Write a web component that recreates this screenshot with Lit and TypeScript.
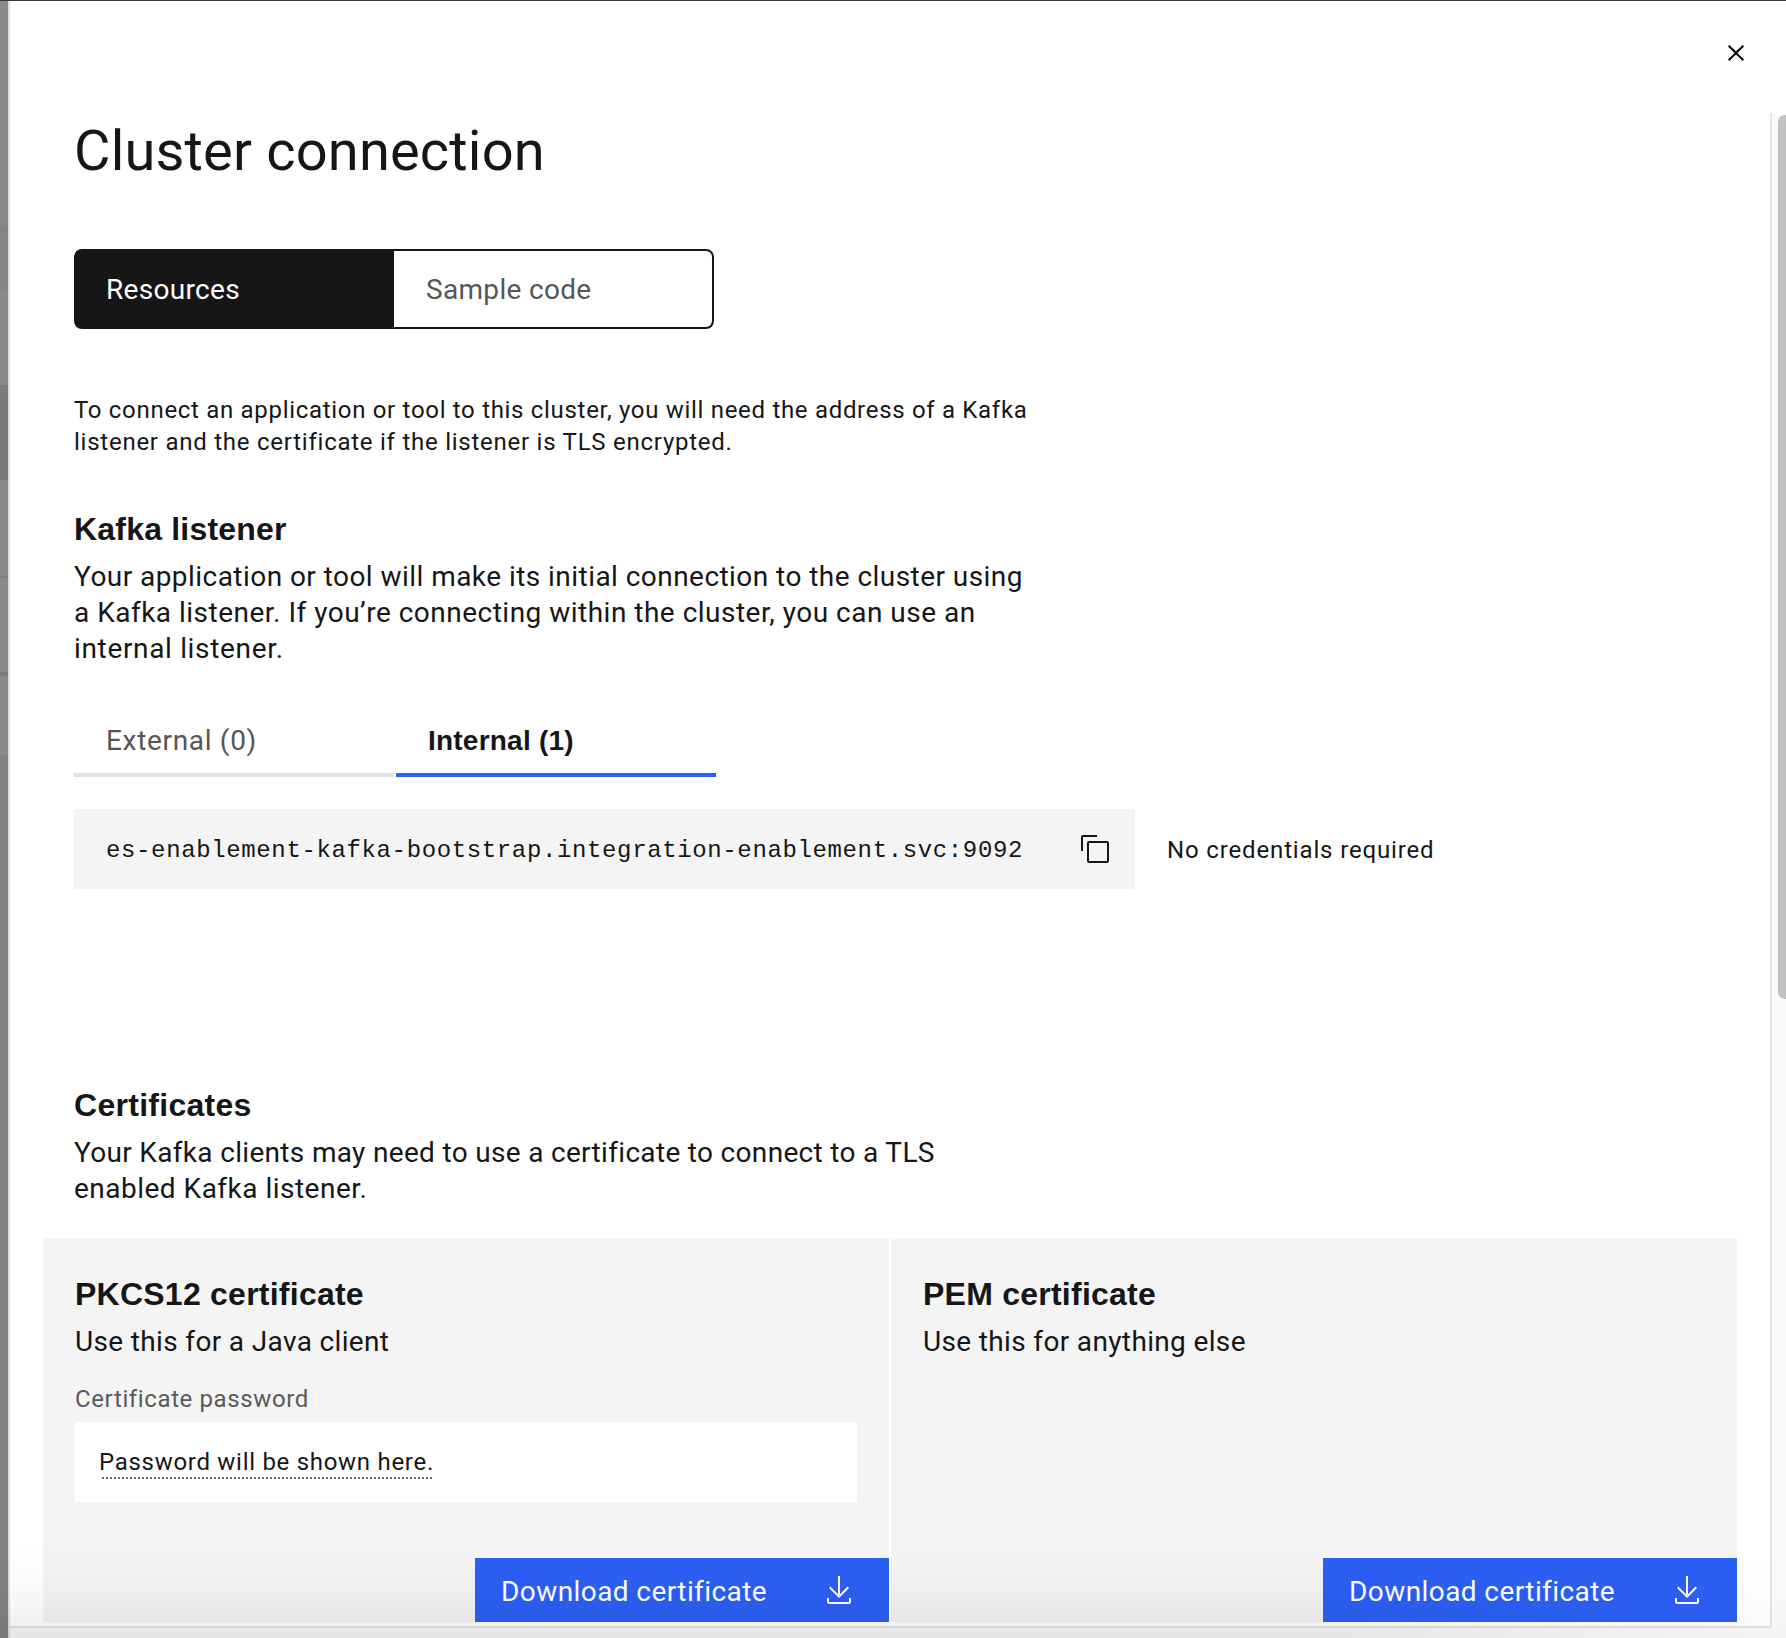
import { LitElement, html, css, svg } from "lit";
import { customElement, property } from "lit/decorators.js";

const copyIcon = html`<svg class="icon" width="32" height="32" viewBox="0 0 32 32" fill="currentColor">
  ${svg`<path d="M28,10V28H10V10H28m0-2H10a2,2,0,0,0-2,2V28a2,2,0,0,0,2,2H28a2,2,0,0,0,2-2V10a2,2,0,0,0-2-2Z"></path>
  <path d="M4,18H2V4A2,2,0,0,1,4,2H18V4H4Z"></path>`}
</svg>`;

const downloadIcon = html`<svg class="icon" width="32" height="32" viewBox="0 0 32 32" fill="currentColor">
  ${svg`<path d="M26,24v4H6V24H4v4H4a2,2,0,0,0,2,2H26a2,2,0,0,0,2-2V24Z"></path>
  <path d="M26 14 24.59 12.59 17 20.17 17 2 15 2 15 20.17 7.41 12.59 6 14 16 24 26 14Z"></path>`}
</svg>`;

const closeIcon = html`<svg class="icon" width="32" height="32" viewBox="0 0 32 32" fill="currentColor">
  ${svg`<path d="M24 9.4 22.6 8 16 14.6 9.4 8 8 9.4 14.6 16 8 22.6 9.4 24 16 17.4 22.6 24 24 22.6 17.4 16 24 9.4Z"></path>`}
</svg>`;

@customElement("download-button")
export class DownloadButton extends LitElement {
  static styles = css`
    :host { display: block; }
    .button {
      display: flex;
      align-items: center;
      justify-content: space-between;
      box-sizing: border-box;
      width: 414px;
      height: 64px;
      margin: 0;
      padding: 0 34px 0 26px;
      border: 0;
      border-radius: 0;
      background: #2c60f4;
      color: #fff;
      font: 400 28px/36px Roboto, sans-serif;
      letter-spacing: 0.42px;
      text-align: left;
    }
    .label { padding-top: 4px; }
    .icon { display: block; }
  `;
  render() {
    return html`<button class="button"><span class="label">Download certificate</span>${downloadIcon}</button>`;
  }
}

@customElement("certificate-card")
export class CertificateCard extends LitElement {
  @property() heading = "";
  @property() description = "";
  static styles = css`
    :host {
      display: flex;
      flex-direction: column;
      box-sizing: border-box;
      height: 384px;
      padding-top: 36px;
      background: #f4f4f4;
      color: #161616;
    }
    .content { padding: 0 32px; }
    .heading {
      margin: 0 0 10px;
      font: 700 32px/40px "Liberation Sans", Arial, sans-serif;
      letter-spacing: 0.24px;
    }
    .description {
      margin: 0;
      font: 400 28px/36px Roboto, sans-serif;
      letter-spacing: 0.35px;
    }
    .action { display: flex; justify-content: flex-end; margin-top: auto; }
  `;
  render() {
    return html`
      <div class="content">
        <h3 class="heading">${this.heading}</h3>
        <p class="description">${this.description}</p>
        <slot></slot>
      </div>
      <div class="action"><download-button></download-button></div>
    `;
  }
}

@customElement("app-root")
export class AppRoot extends LitElement {
  static styles = css`
    :host {
      display: block;
      position: relative;
      width: 1786px;
      height: 1638px;
      overflow: hidden;
      background: #fff;
      color: #161616;
      font: 400 28px/36px Roboto, sans-serif;
    }
    .shell {
      display: grid;
      grid-template-columns: 8px 2px 1fr;
      box-sizing: border-box;
      height: 100%;
      border-top: 1px solid #393839;
    }
    .backdrop { display: flex; flex-direction: column; background: #8a8a8a; }
    .band-1 { margin-top: 224px; height: 64px; background: #848484; }
    .band-2 { margin-top: 96px; height: 95px; background: #7b7b7b; }
    .band-3 { margin-top: 96px; height: 2px; background: #7d7d7d; }
    .band-4 { margin-top: 94px; height: 4px; background: #7b7b7b; }
    .band-5 { margin-top: 79px; flex: 1; background: #838383; }
    .edge { background: #dfdfdf; }
    .panel {
      display: grid;
      grid-template-columns: 1fr 14px;
      grid-template-rows: 112px 1fr 10px;
    }
    .header {
      grid-column: 1 / 3;
      display: flex;
      justify-content: flex-end;
      padding: 36px 34px 0 0;
    }
    .close { padding: 0; border: 0; background: none; color: #000; height: 32px; }
    .icon { display: block; }
    .body {
      display: flex;
      flex-direction: column;
      align-items: flex-start;
      padding: 6px 33px 0 64px;
      border-right: 2px solid #e6e6e6;
      border-bottom: 2px solid #e2e2e2;
    }
    .track {
      grid-row: 2 / 4;
      grid-column: 2;
      padding: 2px 0 0 6px;
      overflow: hidden;
      background: #fafafa;
    }
    .thumb { width: 14px; height: 884px; border-radius: 7px; background: #c1c1c1; }
    .corner { background: #fafafa; }
    .title { margin: 0; font-size: 56px; line-height: 64px; font-weight: 400; letter-spacing: 0.18px; }
    .switcher {
      display: grid;
      grid-template-columns: 318px 1fr;
      box-sizing: border-box;
      width: 640px;
      height: 80px;
      margin-top: 66px;
      border: 2px solid #161616;
      border-radius: 8px;
    }
    .segment { display: flex; align-items: center; padding: 2px 0 0 30px; color: #565656; letter-spacing: 0.32px; }
    .segment.selected { background: #161616; color: #fff; }
    .segment.other { padding-left: 32px; }
    .intro { margin: 65px 0 0; font-size: 24px; line-height: 32px; }
    .line { display: block; white-space: nowrap; }
    .ls-28 { letter-spacing: 0.32px; }
    .ls-45 { letter-spacing: 0.45px; }
    .ls-49 { letter-spacing: 0.49px; }
    .ls-65 { letter-spacing: 0.66px; }
    .ls-69 { letter-spacing: 0.69px; }
    .ls-76 { letter-spacing: 0.75px; }
    .heading {
      margin: 51px 0 10px;
      font: 700 32px/40px "Liberation Sans", Arial, sans-serif;
      letter-spacing: 0.2px;
    }
    .certificates { margin-top: 196px; letter-spacing: 0.28px; }
    .copy { margin: 0; }
    .tabs { display: flex; gap: 2px; margin-top: 46px; }
    .tab {
      box-sizing: border-box;
      width: 320px;
      height: 64px;
      padding: 10px 0 0 32px;
      border-bottom: 4px solid #e0e0e0;
      color: #565656;
      letter-spacing: 0.68px;
    }
    .tab.selected {
      border-color: #2c60f4;
      color: #161616;
      font-family: "Liberation Sans", Arial, sans-serif;
      font-weight: 700;
      letter-spacing: 0.22px;
    }
    .address-row { display: flex; align-items: center; gap: 32px; margin-top: 32px; }
    .address {
      display: flex;
      align-items: center;
      justify-content: space-between;
      box-sizing: border-box;
      width: 1061px;
      height: 80px;
      padding: 0 24px 0 32px;
      background: #f4f4f4;
    }
    .url {
      padding-top: 4px;
      font: 400 24px/32px "Liberation Mono", monospace;
      letter-spacing: 0.63px;
    }
    .credentials { padding-top: 1px; font-size: 24px; line-height: 32px; letter-spacing: 0.85px; }
    .cards {
      display: grid;
      grid-template-columns: 1fr 1fr;
      gap: 2px;
      align-self: stretch;
      margin: 31px 0 0 -31px;
    }
    .field-label {
      margin: 23px 0 7px;
      color: #5a5a5a;
      font-size: 24px;
      line-height: 32px;
      letter-spacing: 0.62px;
    }
    .field {
      display: flex;
      align-items: center;
      box-sizing: border-box;
      height: 80px;
      padding-left: 24px;
      background: #fff;
    }
    .hint { position: relative; font-size: 24px; line-height: 32px; letter-spacing: 0.71px; }
    .hint::after {
      content: "";
      position: absolute;
      left: 3px;
      right: 0;
      bottom: -1px;
      height: 2px;
      background: repeating-linear-gradient(to right, #6a6a6a 0 2px, #fff 2px 4px);
    }
    .shade {
      position: absolute;
      inset: auto 0 0 0;
      height: 96px;
      background: linear-gradient(to top, rgba(0, 0, 0, 0.08), rgba(0, 0, 0, 0.04) 30%, rgba(0, 0, 0, 0.01) 65%, transparent);
      mask-image: linear-gradient(to right, #000 0 75%, rgba(0, 0, 0, 0.3));
      pointer-events: none;
    }
  `;

  render() {
    return html`
      <div class="shell">
        <div class="backdrop">
          <div class="band-1"></div>
          <div class="band-2"></div>
          <div class="band-3"></div>
          <div class="band-4"></div>
          <div class="band-5"></div>
        </div>
        <div class="edge"></div>
        <div class="panel">
          <header class="header"><button class="close" aria-label="Close">${closeIcon}</button></header>
          <main class="body">
            <h1 class="title">Cluster connection</h1>
            <div class="switcher">
              <div class="segment selected">Resources</div>
              <div class="segment other">Sample code</div>
            </div>
            <p class="intro">
              <span class="line ls-69">To connect an application or tool to this cluster, you will need the address of a Kafka</span>
              <span class="line ls-76">listener and the certificate if the listener is TLS encrypted.</span>
            </p>
            <h2 class="heading">Kafka listener</h2>
            <p class="copy">
              <span class="line ls-45">Your application or tool will make its initial connection to the cluster using</span>
              <span class="line ls-49">a Kafka listener. If you’re connecting within the cluster, you can use an</span>
              <span class="line ls-65">internal listener.</span>
            </p>
            <div class="tabs">
              <div class="tab">External (0)</div>
              <div class="tab selected">Internal (1)</div>
            </div>
            <div class="address-row">
              <div class="address">
                <span class="url">es-enablement-kafka-bootstrap.integration-enablement.svc:9092</span>
                ${copyIcon}
              </div>
              <span class="credentials">No credentials required</span>
            </div>
            <h2 class="heading certificates">Certificates</h2>
            <p class="copy">
              <span class="line ls-28">Your Kafka clients may need to use a certificate to connect to a TLS</span>
              <span class="line ls-49">enabled Kafka listener.</span>
            </p>
            <div class="cards">
              <certificate-card heading="PKCS12 certificate" description="Use this for a Java client">
                <div class="field-label">Certificate password</div>
                <div class="field"><span class="hint">Password will be shown here.</span></div>
              </certificate-card>
              <certificate-card heading="PEM certificate" description="Use this for anything else"></certificate-card>
            </div>
          </main>
          <div class="track"><div class="thumb"></div></div>
          <div class="corner"></div>
        </div>
      </div>
      <div class="shade"></div>
    `;
  }
}
